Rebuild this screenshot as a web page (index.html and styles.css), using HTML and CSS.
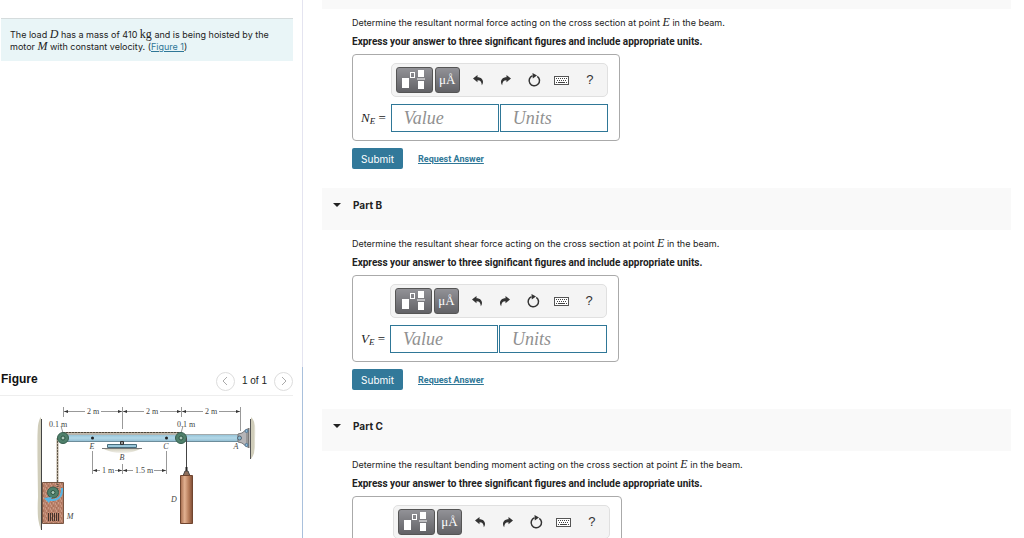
FILE: index.html
```html
<!DOCTYPE html>
<html lang="en">
<head>
<meta charset="utf-8">
<title>Resultant forces in a beam</title>
<link rel="stylesheet" href="styles.css">
</head>
<body>
<svg class="sprite" aria-hidden="true">
  <symbol id="i-template" viewBox="0 0 24 22">
    <path d="M0 9h7v10H0z" fill="#fff"/>
    <rect x="8.500" y="3.500" width="4" height="5" fill="none" stroke="#fff"/>
    <path d="M16 1h6v7h-6zM15 9.500h8v1h-8zM16 12h6v8h-6z" fill="#fff"/>
  </symbol>
  <symbol id="i-undo" viewBox="0 0 12 12">
    <path d="M1 4.500 5.500 1v2.200c3.800 0 5.500 2.300 5.500 4.600 0 1.400-.5 2.500-1.200 3.400C9.700 8.300 8.500 6.300 5.500 6.300V8.300z" fill="#333"/>
  </symbol>
  <symbol id="i-redo" viewBox="0 0 12 12">
    <path d="M11 4.500 6.500 1v2.200C2.700 3.200 1 5.500 1 7.800c0 1.400.5 2.500 1.200 3.400C2.300 8.300 3.500 6.300 6.500 6.300V8.300z" fill="#333"/>
  </symbol>
  <symbol id="i-reset" viewBox="0 0 14 14">
    <path d="M10.300 3.300A5.200 5.200 0 1 1 5.500 2.700" fill="none" stroke="#333" stroke-width="1.500"/>
    <path d="M5.500 0 10 2.500 5.800 5.600z" fill="#333"/>
  </symbol>
  <symbol id="i-keys" viewBox="0 0 15 9">
    <rect x=".5" y=".5" width="14" height="8" fill="#fff" stroke="#555"/>
    <path d="M2 2.500h11M3 4.500h10" stroke="#444" stroke-dasharray="1 1"/>
    <path d="M2 6.500h1M4 6.500h7M12 6.500h1" stroke="#444"/>
  </symbol>
</svg>
<div class="page">
  <aside class="side">
    <p class="intro">The load <i class="math">D</i> has a mass of 410 <span class="math">kg</span> and is being hoisted by the motor <i class="math">M</i> with constant velocity. (<a href="#figure">Figure 1</a>)</p>
    <section class="figure" id="figure">
      <header class="figure-head">
        <h2>Figure</h2>
        <nav class="pager">
          <button type="button" aria-label="Previous figure"><svg width="6" height="10" viewBox="0 0 6 10"><path d="M5 1 1 5l4 4"/></svg></button>
          <span>1 of 1</span>
          <button type="button" aria-label="Next figure"><svg width="6" height="10" viewBox="0 0 6 10"><path d="m1 1 4 4-4 4"/></svg></button>
        </nav>
      </header>
      <svg class="diagram" viewBox="0 396 292 142" role="img" aria-label="Beam carried at A and B with a pulley, motor M and load D">
        <defs>
          <linearGradient id="beam" x2="0" y2="1"><stop offset="0" stop-color="#8ebed4"/><stop offset=".5" stop-color="#b3d8e8"/><stop offset="1" stop-color="#8ab8ce"/></linearGradient>
          <linearGradient id="load"><stop offset="0" stop-color="#a56b4c"/><stop offset=".35" stop-color="#e2b191"/><stop offset=".7" stop-color="#b57a58"/><stop offset="1" stop-color="#7d4c35"/></linearGradient>
          <linearGradient id="wallL"><stop offset="0" stop-color="#d3d0bd" stop-opacity=".3"/><stop offset=".4" stop-color="#d0cdba"/></linearGradient>
          <linearGradient id="wallR"><stop offset=".6" stop-color="#d0cdba"/><stop offset="1" stop-color="#d3d0bd" stop-opacity=".3"/></linearGradient>
          <linearGradient id="ground" x2="0" y2="1"><stop offset="0" stop-color="#c7c4ae"/><stop offset="1" stop-color="#d3d0bd" stop-opacity=".3"/></linearGradient>
          <pattern id="speckle" width="5" height="5" patternUnits="userSpaceOnUse"><rect width="5" height="5" fill="#b98069"/><path d="M1 1h1M3 3h1M0 4h1" stroke="#dcb5a0"/><path d="M3 1h1M1 3h1" stroke="#9b654e"/></pattern>
        </defs>
        <path d="M41 417q-5 5-4 40l1 40q-2 20 3 33z" fill="url(#wallL)"/>
        <path d="M41.500 419v111" stroke="#444"/>
        <path d="M251 417q6 5 4 22 1 14-4 20z" fill="url(#wallR)"/>
        <path d="M250.500 419v40" stroke="#555"/>
        <g stroke="#999" fill="none">
          <path d="M63.500 407v10M122.500 407v22M181.500 407v10M240.500 407v24M92.500 451v23M122.500 464v10M166.500 451v23"/>
          <path d="M64 411.500h21M101 411.500h43M160 411.500h43M219 411.500h21M93 470.500h7M115 470.500h18M154 470.500h12"/>
          <path d="m61 426 2 7M183 426l-2 7"/>
        </g>
        <g fill="#333">
          <path d="m64 411.500 4-1.500v3zM122 411.500l-4-1.500v3zM123 411.500l4-1.500v3zM181 411.500l-4-1.500v3zM182 411.500l4-1.500v3zM240 411.500l-4-1.500v3zM93 470.500l4-1.500v3zM122 470.500l-4-1.500v3zM123 470.500l4-1.500v3zM166 470.500l-4-1.500v3z"/>
        </g>
        <rect x="63" y="434" width="176" height="8" fill="url(#beam)"/>
        <path d="M63 434.500h176" stroke="#a2a9ab"/><path d="M63 441.500h176" stroke="#6d8d9b"/>
        <path d="M63 433.500h118" stroke="#c3bcae" stroke-width="2"/>
        <path d="M63 432.500h118" stroke="#8c8070"/>
        <path d="M63 432.500h118" stroke="#4e463a" stroke-dasharray="2 1"/>
        <path d="M57.500 438v45" stroke="#b5a896" stroke-width="2"/><path d="M57.500 438v45" stroke="#5f5546" stroke-dasharray="2 1"/>
        <g stroke="#333">
          <path d="m238 434 4-1 5-4v18l-5-4-4-1z" fill="#b5b5b8" stroke="#777"/>
          <circle cx="239.500" cy="438" r="2" fill="#8cbbd0" stroke="#567"/>
          <path d="M248.500 428v20" stroke="#777" stroke-width="2"/>
          <circle cx="246.500" cy="431" r="1.500" fill="#8fbdd4" stroke="#579"/><circle cx="246.500" cy="445" r="1.500" fill="#8fbdd4" stroke="#579"/>
          <path d="M107.500 444.500h29v3h-29z" fill="#9ac7da" stroke="#486c7b"/>
          <path d="M120.500 441.500h3v3h-3z" fill="#999"/>
        </g>
        <path d="M102 448h40q-8 5-20 5t-20-5z" fill="url(#ground)"/>
        <path d="M102 448.500h40" stroke="#777"/>
        <circle cx="92.500" cy="438" r="1.500" fill="#222"/><circle cx="166.500" cy="438" r="1.500" fill="#222"/>
        <path d="M42.500 482.500h21v41h-21z" fill="url(#speckle)" stroke="#795743"/>
        <path d="M48.500 513v8M50.500 513v8M52.500 513v8M54.500 513v8M56.500 513v8M58.500 513v8" stroke="#43332b"/>
        <path d="M57.500 482v9" stroke="#5f5244" stroke-dasharray="1 1" stroke-width="2"/>
        <g fill="#4f806b" stroke="#365e4e">
          <circle cx="63" cy="438" r="5.500"/><circle cx="181" cy="438" r="5.500"/><circle cx="53" cy="492.500" r="5.500"/>
        </g>
        <g fill="#a9c7b8" stroke="#2b5443">
          <circle cx="63" cy="438" r="2"/><circle cx="181" cy="438" r="2"/><circle cx="53" cy="492.500" r="2"/>
        </g>
        <path d="M62 488q1 13-13 12" fill="none" stroke="#55b5e5" stroke-width="2"/><path d="m44 498 8-1-3 6z" fill="#55b5e5"/>
        <path d="M186.500 438v33" stroke="#444"/><path d="M186.500 467v4" stroke="#222" stroke-width="2"/>
        <path d="m183 476 2-5h3l2 5z" fill="#8e6e5b" stroke="#444"/>
        <path d="M180.500 475.500h12v48h-12z" fill="url(#load)" stroke="#70452f"/>
        <g class="dims">
          <text x="93" y="414">2 m</text><text x="152" y="414">2 m</text><text x="211" y="414">2 m</text>
          <text x="58" y="427">0.1 m</text><text x="186" y="427">0.1 m</text>
          <text x="108" y="473">1 m</text><text x="144" y="473">1.5 m</text>
        </g>
        <g class="points">
          <text x="92" y="449">E</text><text x="166" y="449">C</text><text x="122" y="460">B</text><text x="236" y="449">A</text><text x="174" y="502">D</text><text x="70" y="519">M</text>
        </g>
      </svg>
    </section>
  </aside>
  <main class="main">
    <div class="part-edge"></div>
    <section class="part">
      <p>Determine the resultant normal force acting on the cross section at point <i class="math">E</i> in the beam.</p>
      <p class="ask">Express your answer to three significant figures and include appropriate units.</p>
      <form class="answer">
        <div class="tools">
          <button type="button" class="dark wide" aria-label="Templates"><svg width="24" height="22"><use href="#i-template"/></svg></button>
          <button type="button" class="dark">μÅ</button>
          <button type="button" aria-label="Undo"><svg width="12" height="12"><use href="#i-undo"/></svg></button>
          <button type="button" aria-label="Redo"><svg width="12" height="12"><use href="#i-redo"/></svg></button>
          <button type="button" aria-label="Reset"><svg width="14" height="14"><use href="#i-reset"/></svg></button>
          <button type="button" aria-label="Keyboard"><svg width="15" height="9"><use href="#i-keys"/></svg></button>
          <button type="button">?</button>
        </div>
        <label for="value-a"><i>N<sub>E</sub></i> =</label>
        <div class="fields"><input id="value-a" placeholder="Value"><input aria-label="Units" placeholder="Units"></div>
      </form>
      <div class="actions"><button type="submit">Submit</button><a href="#answer-a">Request Answer</a></div>
    </section>
    <h2 class="part-head"><button type="button">Part B</button></h2>
    <section class="part">
      <p>Determine the resultant shear force acting on the cross section at point <i class="math">E</i> in the beam.</p>
      <p class="ask">Express your answer to three significant figures and include appropriate units.</p>
      <form class="answer">
        <div class="tools">
          <button type="button" class="dark wide" aria-label="Templates"><svg width="24" height="22"><use href="#i-template"/></svg></button>
          <button type="button" class="dark">μÅ</button>
          <button type="button" aria-label="Undo"><svg width="12" height="12"><use href="#i-undo"/></svg></button>
          <button type="button" aria-label="Redo"><svg width="12" height="12"><use href="#i-redo"/></svg></button>
          <button type="button" aria-label="Reset"><svg width="14" height="14"><use href="#i-reset"/></svg></button>
          <button type="button" aria-label="Keyboard"><svg width="15" height="9"><use href="#i-keys"/></svg></button>
          <button type="button">?</button>
        </div>
        <label for="value-b"><i>V<sub>E</sub></i> =</label>
        <div class="fields"><input id="value-b" placeholder="Value"><input aria-label="Units" placeholder="Units"></div>
      </form>
      <div class="actions"><button type="submit">Submit</button><a href="#answer-b">Request Answer</a></div>
    </section>
    <h2 class="part-head"><button type="button">Part C</button></h2>
    <section class="part">
      <p>Determine the resultant bending moment acting on the cross section at point <i class="math">E</i> in the beam.</p>
      <p class="ask">Express your answer to three significant figures and include appropriate units.</p>
      <form class="answer">
        <div class="tools">
          <button type="button" class="dark wide" aria-label="Templates"><svg width="24" height="22"><use href="#i-template"/></svg></button>
          <button type="button" class="dark">μÅ</button>
          <button type="button" aria-label="Undo"><svg width="12" height="12"><use href="#i-undo"/></svg></button>
          <button type="button" aria-label="Redo"><svg width="12" height="12"><use href="#i-redo"/></svg></button>
          <button type="button" aria-label="Reset"><svg width="14" height="14"><use href="#i-reset"/></svg></button>
          <button type="button" aria-label="Keyboard"><svg width="15" height="9"><use href="#i-keys"/></svg></button>
          <button type="button">?</button>
        </div>
        <label for="value-c"><i>M<sub>E</sub></i> =</label>
        <div class="fields"><input id="value-c" placeholder="Value"><input aria-label="Units" placeholder="Units"></div>
      </form>
    </section>
  </main>
</div>
</body>
</html>
```
FILE: styles.css
```css
* { box-sizing: border-box; }
body {
  margin: 0;
  background: #fff;
  color: #222;
  font: 10px/12px "Liberation Sans", Arial, sans-serif;
}
button, input { font: inherit; margin: 0; }
h2, p { margin: 0; }
p { font: 9px/12px Inter, "Liberation Sans", sans-serif; }
.sprite { display: none; }
svg { display: block; }
.page { display: flex; height: 100vh; overflow: hidden; }
.math { font-family: "Liberation Serif", serif; font-size: 12px; line-height: 0; }

.side {
  flex: 0 0 303px;
  display: flex;
  flex-direction: column;
  justify-content: space-between;
  padding-top: 18px;
  border-right: 1px solid #e4e4f0;
}
.intro {
  margin: 0 9px 0 1px;
  padding: 10px 9px 8px;
  min-height: 43px;
  border-top: 1px solid #d5dcdd;
  background: #e9f5f7;
}
a { color: #2f7797; }
.figure { border-right: 1px solid #a9c0dc; margin-right: -1px; }
.figure-head {
  display: flex;
  justify-content: space-between;
  align-items: center;
  height: 29px;
  margin-right: 9px;
  border-bottom: 1px solid #eee;
}
.figure-head h2 { font-size: 12px; padding: 0 0 4px 1px; color: #111; }
.pager { display: flex; align-items: center; gap: 7px; }
.pager button {
  display: grid;
  place-items: center;
  width: 19px;
  height: 19px;
  padding: 0;
  border: 1px solid #ddd;
  border-radius: 50%;
  background: #fff;
}
.pager path { fill: none; stroke: #aaa; }
.diagram { width: 292px; }
.dims, .points { font-family: "Liberation Serif", serif; font-size: 8px; text-anchor: middle; fill: #444; }
.points { font-style: italic; }

.main { flex: 1; padding: 0 13px 0 19px; overflow: hidden; }
.part-edge { height: 9px; background: #f9f9f9; }
.part { padding: 8px 0 19px 30px; }
.part-head { height: 42px; background: #f9f9f9; font-size: 10px; }
.part-head button {
  display: flex;
  align-items: center;
  gap: 12px;
  padding: 11px;
  border: 0;
  background: none;
  color: #222;
  font-family: Inter, "Liberation Sans", sans-serif;
}
.part-head button::before {
  content: "";
  border: 4px solid transparent;
  border-top-color: #222;
  border-bottom: 0;
}
.ask { margin: 7px 0 6px; font: bold 10px/12px Roboto, "Liberation Sans", sans-serif; }

.answer {
  display: grid;
  grid-template-columns: auto auto;
  gap: 7px 5px;
  width: fit-content;
  padding: 8px 11px 8px 8px;
  border: 1px solid #aaa;
  border-radius: 4px;
}
.tools {
  grid-column: 2;
  display: flex;
  align-items: center;
  height: 34px;
  padding: 0 3px 0 4px;
  border: 1px solid #e0e0e0;
  border-radius: 5px;
  background: #f4f4f4;
}
.tools button {
  display: grid;
  place-items: center;
  width: 28px;
  height: 26px;
  padding: 0;
  border: 0;
  background: none;
  color: #333;
  font-size: 13px;
}
.tools .dark {
  width: 25px;
  margin-right: 4px;
  border: 1px solid #555;
  border-radius: 3px;
  background: linear-gradient(#929297, #626266);
  color: #fff;
  font: 13px "Liberation Serif", serif;
}
.tools .wide { width: 37px; margin-right: 2px; }
.answer label { align-self: center; font: 13px/16px "Liberation Serif", serif; }
.answer sub { font-size: 9px; line-height: 1; vertical-align: -2px; }
.fields { display: grid; grid-template-columns: 108px 108px; gap: 1px; }
.fields input {
  width: 100%;
  height: 28px;
  padding: 0 12px;
  border: 1px solid #2f7797;
  border-radius: 0;
  background: #fff;
  font: italic 18px "Liberation Serif", serif;
}
.fields input::placeholder { color: #909090; opacity: 1; }
.actions { display: flex; align-items: center; gap: 15px; margin-top: 7px; }
.actions button {
  width: 51px;
  height: 21px;
  padding: 0;
  border: 0;
  border-radius: 2px;
  background: #32799a;
  color: #fff;
  font-family: Inter, "Liberation Sans", sans-serif;
}
.actions a { font: bold 9px/12px Roboto, "Liberation Sans", sans-serif; }
```
